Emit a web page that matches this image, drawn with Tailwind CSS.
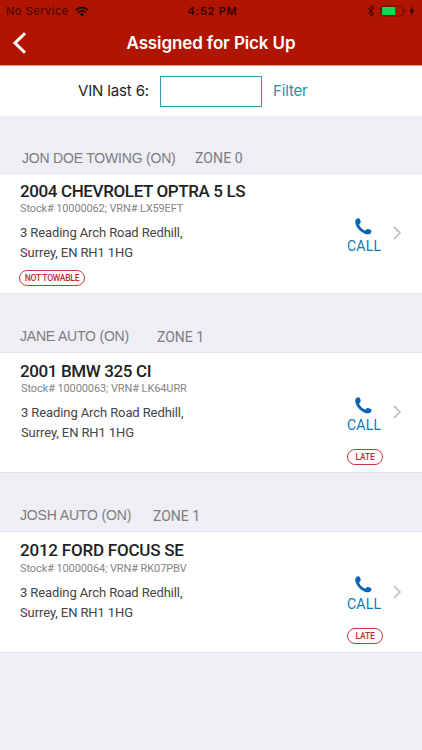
<!DOCTYPE html>
<html lang="en">
<head>
<meta charset="utf-8">
<title>Assigned for Pick Up</title>
<script src="https://cdn.jsdelivr.net/npm/@tailwindcss/browser@4"></script>
</head>
<body class="w-[422px] h-[750px] overflow-hidden bg-[#efeef4] font-['Roboto',sans-serif] whitespace-nowrap">
<svg class="hidden">
  <symbol id="handset" viewBox="0 0 17 17"><path d="M1.2 1.3C2 .4 3.300 0 4.200.5C5.200 1.200 5.800 3 5.700 4.200C5.600 5.300 4.200 5.500 4.200 6.500C4.400 8.700 8 12.300 10.100 12.400C11.200 12.400 11.400 11.100 12.500 11C13.800 10.900 16 11.700 16.400 12.800C16.800 13.900 15.900 15.300 14.800 15.900C12.700 17 9.300 16 6.300 13.700C3.100 11.200.7 7.600.3 4.700C.1 3.400.4 2.200 1.200 1.300Z"/></symbol>
  <symbol id="next" viewBox="0 0 8 14"><path d="M1 1l6 6-6 6" fill="none" stroke="#c5c5ca" stroke-width="1.900"/></symbol>
</svg>

<header class="h-[66px] bg-[#af1500] border-b border-[#f0938a]">
  <div class="h-[22px] flex items-center px-[6px] font-['Inter',sans-serif] text-[11px] text-[#3a0600]">
    <div class="w-[180px] flex items-center gap-[6px]">
      <span class="tracking-[0.55px]">No Service</span>
      <svg class="w-[14px] h-[11px]" viewBox="0 0 14 11" fill="none" stroke="#240300" stroke-width="1.900"><path d="M.8 4.200a8.800 8.800 0 0 1 12.400 0M3 6.600a5.700 5.700 0 0 1 8 0"/><path d="M7 10.500L4.900 8.400a3 3 0 0 1 4.200 0z" fill="#240300" stroke="none"/></svg>
    </div>
    <span class="w-[182px] font-semibold text-[#300500] pl-[2px] tracking-[0.75px]">4:52 PM</span>
    <svg class="w-[8px] h-[12px]" viewBox="0 0 8 12" fill="none" stroke="#300500" stroke-width="1"><path d="M1 3l6 6-3 2.400V.6L7 3 1 9"/></svg>
    <svg class="w-[36px] h-[12px] ml-[5px]" viewBox="0 0 36 12"><rect x=".9" y="1" width="22.500" height="10" rx="1.500" fill="none" stroke="#6b0d00"/><rect x="2.200" y="2" width="13" height="8" rx=".5" fill="#09dc54"/><path d="M24.800 4.500c1.200.3 1.200 2.700 0 3z" fill="#6b0d00"/><path d="M33 1.200l-3.600 5.300h2.200l-.7 4.300 3.800-5.600h-2.300z" fill="#240300"/></svg>
  </div>
  <div class="h-[43px] relative flex items-center justify-center">
    <svg class="absolute left-[12px] top-[10px] w-[15px] h-[22px]" viewBox="0 0 15 22" fill="none" stroke="#fff" stroke-width="3"><path d="M13 1.200L3 11l10 9.800"/></svg>
    <h1 class="font-['Inter',sans-serif] font-semibold text-[17px] text-white tracking-[-0.12px]">Assigned for Pick Up</h1>
  </div>
</header>

<form class="h-[50px] bg-white flex items-center pl-[78px] font-['Inter',sans-serif] text-[15px]">
  <label class="w-[82px] text-[#1c1c1c] tracking-[-0.15px] pt-px">VIN last 6:</label>
  <div class="w-[102px] h-[31px] border-[1.500px] border-[#3199aa]"></div>
  <span class="pl-[11px] text-[#2593a5] tracking-[-0.15px]">Filter</span>
</form>

<main>
  <section>
    <div class="h-[57px] flex pt-[32px] pl-[22px] text-[14px] leading-[20px] text-[#7c7c81]">
      <span class="w-[173px] font-['Liberation_Sans',sans-serif] tracking-[-0.2px]">JON DOE TOWING (ON)</span><span class="tracking-[0.1px]">ZONE 0</span>
    </div>
    <div class="h-[121px] bg-white border-y border-[#e4e3e9] flex pl-[20px]">
      <div class="w-[327px] pt-[6px] text-[#444]">
        <h2 class="text-[17px] leading-[22px] font-medium text-[#222] tracking-[-0.38px]">2004 CHEVROLET OPTRA 5 LS</h2>
        <p class="text-[11px] leading-[13px] text-[#858585] tracking-[-0.13px]">Stock# 10000062; VRN# LX59EFT</p>
        <p class="pt-[8px] text-[13px] leading-[20px] tracking-[-0.1px]">3 Reading Arch Road Redhill,<br>Surrey, EN RH1 1HG</p>
        <div class="mt-[7px] w-[66px] h-[16px] -ml-px rounded-full border border-[#c3393b] text-[#c3292b] text-[8.5px] tracking-[-0.25px] font-medium flex items-center justify-center">NOT TOWABLE</div>
      </div>
      <a class="w-[46px] pt-[44px] text-[#0a7cb9] text-[14px]"><svg class="ml-[8px] w-[17px] h-[17px] fill-[#0864b2]"><use href="#handset"/></svg><div class="pt-px leading-[20px] tracking-[0.25px]">CALL</div></a>
      <svg class="w-[8px] h-[14px] mt-[52px]"><use href="#next"/></svg>
    </div>
  </section>
  <section>
    <div class="h-[58px] flex pt-[32px] pl-[20px] text-[14px] leading-[20px] text-[#7c7c81]">
      <span class="w-[137px] font-['Liberation_Sans',sans-serif] tracking-[-0.2px]">JANE AUTO (ON)</span><span class="pt-px">ZONE 1</span>
    </div>
    <div class="h-[121px] bg-white border-y border-[#e4e3e9] flex pl-[20px]">
      <div class="w-[327px] pt-[7px] text-[#444]">
        <h2 class="text-[17px] leading-[22px] font-medium text-[#222] tracking-[-0.38px]">2001 BMW 325 CI</h2>
        <p class="pl-px text-[11px] leading-[13px] text-[#858585] tracking-[-0.1px]">Stock# 10000063; VRN# LK64URR</p>
        <p class="pl-px pt-[8px] text-[13px] leading-[20px] tracking-[-0.1px]">3 Reading Arch Road Redhill,<br>Surrey, EN RH1 1HG</p>
      </div>
      <a class="w-[46px] pt-[44px] text-[#0a7cb9] text-[14px]"><svg class="ml-[8px] w-[17px] h-[17px] fill-[#0864b2]"><use href="#handset"/></svg><div class="pt-px leading-[20px] tracking-[0.25px]">CALL</div>
        <div class="mt-[14px] w-[36px] h-[16px] rounded-full border border-[#c3393b] text-[#c3292b] text-[8.5px] tracking-[-0.15px] font-medium flex items-center justify-center">LATE</div></a>
      <svg class="w-[8px] h-[14px] mt-[52px]"><use href="#next"/></svg>
    </div>
  </section>
  <section>
    <div class="h-[58px] flex pt-[32px] pl-[20px] text-[14px] leading-[20px] text-[#7c7c81]">
      <span class="w-[133px] font-['Liberation_Sans',sans-serif] tracking-[-0.15px]">JOSH AUTO (ON)</span><span class="pt-px">ZONE 1</span>
    </div>
    <div class="h-[122px] bg-white border-y border-[#e4e3e9] flex pl-[20px]">
      <div class="w-[327px] pt-[7px] text-[#444]">
        <h2 class="text-[17px] leading-[22px] font-medium text-[#222] tracking-[-0.22px]">2012 FORD FOCUS SE</h2>
        <p class="pt-px text-[11px] leading-[13px] text-[#858585] tracking-[-0.1px]">Stock# 10000064; VRN# RK07PBV</p>
        <p class="pt-[8px] text-[13px] leading-[20px] tracking-[-0.1px]">3 Reading Arch Road Redhill,<br>Surrey, EN RH1 1HG</p>
      </div>
      <a class="w-[46px] pt-[44px] text-[#0a7cb9] text-[14px]"><svg class="ml-[8px] w-[17px] h-[17px] fill-[#0864b2]"><use href="#handset"/></svg><div class="pt-px leading-[20px] tracking-[0.25px]">CALL</div>
        <div class="mt-[14px] w-[36px] h-[16px] rounded-full border border-[#c3393b] text-[#c3292b] text-[8.5px] tracking-[-0.15px] font-medium flex items-center justify-center">LATE</div></a>
      <svg class="w-[8px] h-[14px] mt-[53px]"><use href="#next"/></svg>
    </div>
  </section>
</main>
</body>
</html>
